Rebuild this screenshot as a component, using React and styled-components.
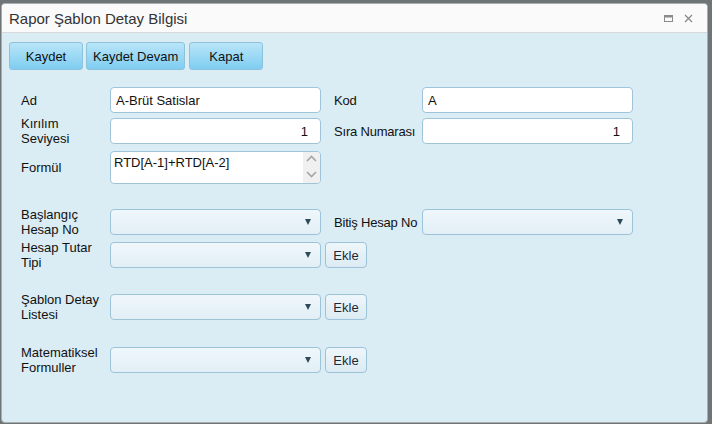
import React from "react";
import styled, { createGlobalStyle } from "styled-components";

const Global = createGlobalStyle`
  html, body { margin: 0; padding: 0; background: #6f7477; }
  body { font-family: "Liberation Sans", Arial, sans-serif; }
  * { box-sizing: border-box; }
`;

const Backdrop = styled.div`
  height: 424px;
  padding: 3px 4px 1px 1px;
`;

const Window = styled.div`
  width: 707px;
  height: 420px;
  border: 1px solid #a9adb0;
  border-radius: 4px;
  overflow: hidden;
  display: flex;
  flex-direction: column;
  background: #daecf4;
`;

const TitleBar = styled.div`
  height: 29px;
  flex: 0 0 29px;
  display: flex;
  align-items: center;
  padding: 0 14px 0 7px;
  background: #fafafa;
  border-bottom: 1px solid #d6d8d9;
`;

const Title = styled.div`
  flex: 1;
  font-size: 15px;
  color: #333;
`;

const TitleIcons = styled.div`
  display: flex;
  align-items: center;
  gap: 11px;
  color: #8a8a8a;
`;

const Body = styled.div`
  flex: 1;
  padding: 9px 0 0 7px;
`;

const Toolbar = styled.div`
  display: flex;
  gap: 3px;
`;

const ToolButton = styled.button`
  min-width: 74px;
  height: 28px;
  padding: 0 6px;
  margin-right: ${(p) => p.$mr || 0}px;
  font-family: "Liberation Sans", Arial, sans-serif;
  font-size: 13px;
  color: #111;
  border: 1px solid #8cc2dc;
  border-radius: 3px;
  background: linear-gradient(#b9e5f8, #7fcdf1);
`;

const Form = styled.div`
  margin: 17px 0 0 12px;
  display: flex;
  flex-direction: column;
`;

const Row = styled.div`
  display: grid;
  grid-template-columns: 89px 212px 100px 212px;
  align-items: center;
  margin-top: ${(p) => p.$mt || 0}px;
  min-height: ${(p) => p.$h || 26}px;
`;

const Label = styled.div`
  font-size: 13px;
  line-height: 15px;
  color: #111;
  padding-right: ${(p) => (p.$second ? 0 : 5)}px;
  padding-left: ${(p) => (p.$second ? 12 : 0)}px;
  white-space: ${(p) => (p.$second ? "nowrap" : "normal")};
  letter-spacing: ${(p) => (p.$second ? "-0.2px" : "0")};
`;

const TextInput = styled.div`
  width: 211px;
  height: 26px;
  display: flex;
  align-items: center;
  justify-content: ${(p) => (p.$right ? "flex-end" : "flex-start")};
  padding: 0 12px 0 5px;
  background: #fff;
  border: 1px solid #9fc4d9;
  border-radius: 4px;
  font-size: 13px;
  color: #111;
`;

const TextAreaBox = styled.div`
  width: 211px;
  height: 33px;
  display: flex;
  background: #fff;
  border: 1px solid #9fc4d9;
  border-radius: 4px;
  overflow: hidden;
`;

const AreaText = styled.div`
  flex: 1;
  padding: 3px 0 0 3px;
  font-size: 13px;
  line-height: 16px;
  color: #111;
`;

const ScrollBar = styled.div`
  width: 17px;
  background: #f0f0f0;
  display: flex;
  flex-direction: column;
  align-items: center;
  justify-content: space-between;
  padding: 3px 0 5px;
`;

const SelectBox = styled.div`
  width: 211px;
  height: 26px;
  display: flex;
  align-items: center;
  justify-content: flex-end;
  padding-right: 9px;
  border: 1px solid #9dc3d8;
  border-radius: 4px;
  background: linear-gradient(#eff7fb, #e2eff6);
`;

const Caret = styled.span`
  width: 0;
  height: 0;
  border-left: 3.5px solid transparent;
  border-right: 3.5px solid transparent;
  border-top: 6px solid #2e4b5b;
`;

const AddButton = styled.button`
  justify-self: start;
  margin-left: 3px;
  width: 42px;
  height: 26px;
  padding: 0;
  font-family: "Liberation Sans", Arial, sans-serif;
  font-size: 13px;
  color: #1d2b38;
  border: 1px solid #9dc3d8;
  border-radius: 4px;
  background: linear-gradient(#eef6fa, #dcebf3);
`;

const Chevron = ({ up }) => (
  <svg width="11" height="7" viewBox="0 0 11 7">
    <path
      d={up ? "M1 6 L5.5 1.5 L10 6" : "M1 1 L5.5 5.5 L10 1"}
      fill="none"
      stroke="#a6a6a6"
      strokeWidth="1.6"
    />
  </svg>
);

const Select = () => (
  <SelectBox>
    <Caret />
  </SelectBox>
);

export default function App() {
  return (
    <>
      <Global />
      <Backdrop>
        <Window>
          <TitleBar>
            <Title>Rapor Şablon Detay Bilgisi</Title>
            <TitleIcons>
              <svg width="9" height="7" viewBox="0 0 9 7">
                <rect x="0.5" y="0.5" width="8" height="6" fill="none" stroke="#8a8a8a" />
                <rect x="0.5" y="0.5" width="8" height="2" fill="#8a8a8a" />
              </svg>
              <svg width="9" height="9" viewBox="0 0 9 9">
                <path d="M1 1 L8 8 M8 1 L1 8" stroke="#8a8a8a" strokeWidth="1.3" />
              </svg>
            </TitleIcons>
          </TitleBar>
          <Body>
            <Toolbar>
              <ToolButton>Kaydet</ToolButton>
              <ToolButton $mr={1}>Kaydet Devam</ToolButton>
              <ToolButton>Kapat</ToolButton>
            </Toolbar>
            <Form>
              <Row>
                <Label>Ad</Label>
                <TextInput>A-Brüt Satislar</TextInput>
                <Label $second>Kod</Label>
                <TextInput>A</TextInput>
              </Row>
              <Row $mt={3} $h={30}>
                <Label>Kırılım Seviyesi</Label>
                <TextInput $right>1</TextInput>
                <Label $second>Sıra Numarası</Label>
                <TextInput $right>1</TextInput>
              </Row>
              <Row $mt={5} $h={33}>
                <Label>Formül</Label>
                <TextAreaBox>
                  <AreaText>RTD[A-1]+RTD[A-2]</AreaText>
                  <ScrollBar>
                    <Chevron up />
                    <Chevron />
                  </ScrollBar>
                </TextAreaBox>
              </Row>
              <Row $mt={23} $h={30}>
                <Label>Başlangıç Hesap No</Label>
                <Select />
                <Label $second>Bitiş Hesap No</Label>
                <Select />
              </Row>
              <Row $mt={3} $h={30}>
                <Label>Hesap Tutar Tipi</Label>
                <Select />
                <AddButton>Ekle</AddButton>
              </Row>
              <Row $mt={22} $h={30}>
                <Label>Şablon Detay Listesi</Label>
                <Select />
                <AddButton>Ekle</AddButton>
              </Row>
              <Row $mt={23} $h={30}>
                <Label>Matematiksel Formuller</Label>
                <Select />
                <AddButton>Ekle</AddButton>
              </Row>
            </Form>
          </Body>
        </Window>
      </Backdrop>
    </>
  );
}
